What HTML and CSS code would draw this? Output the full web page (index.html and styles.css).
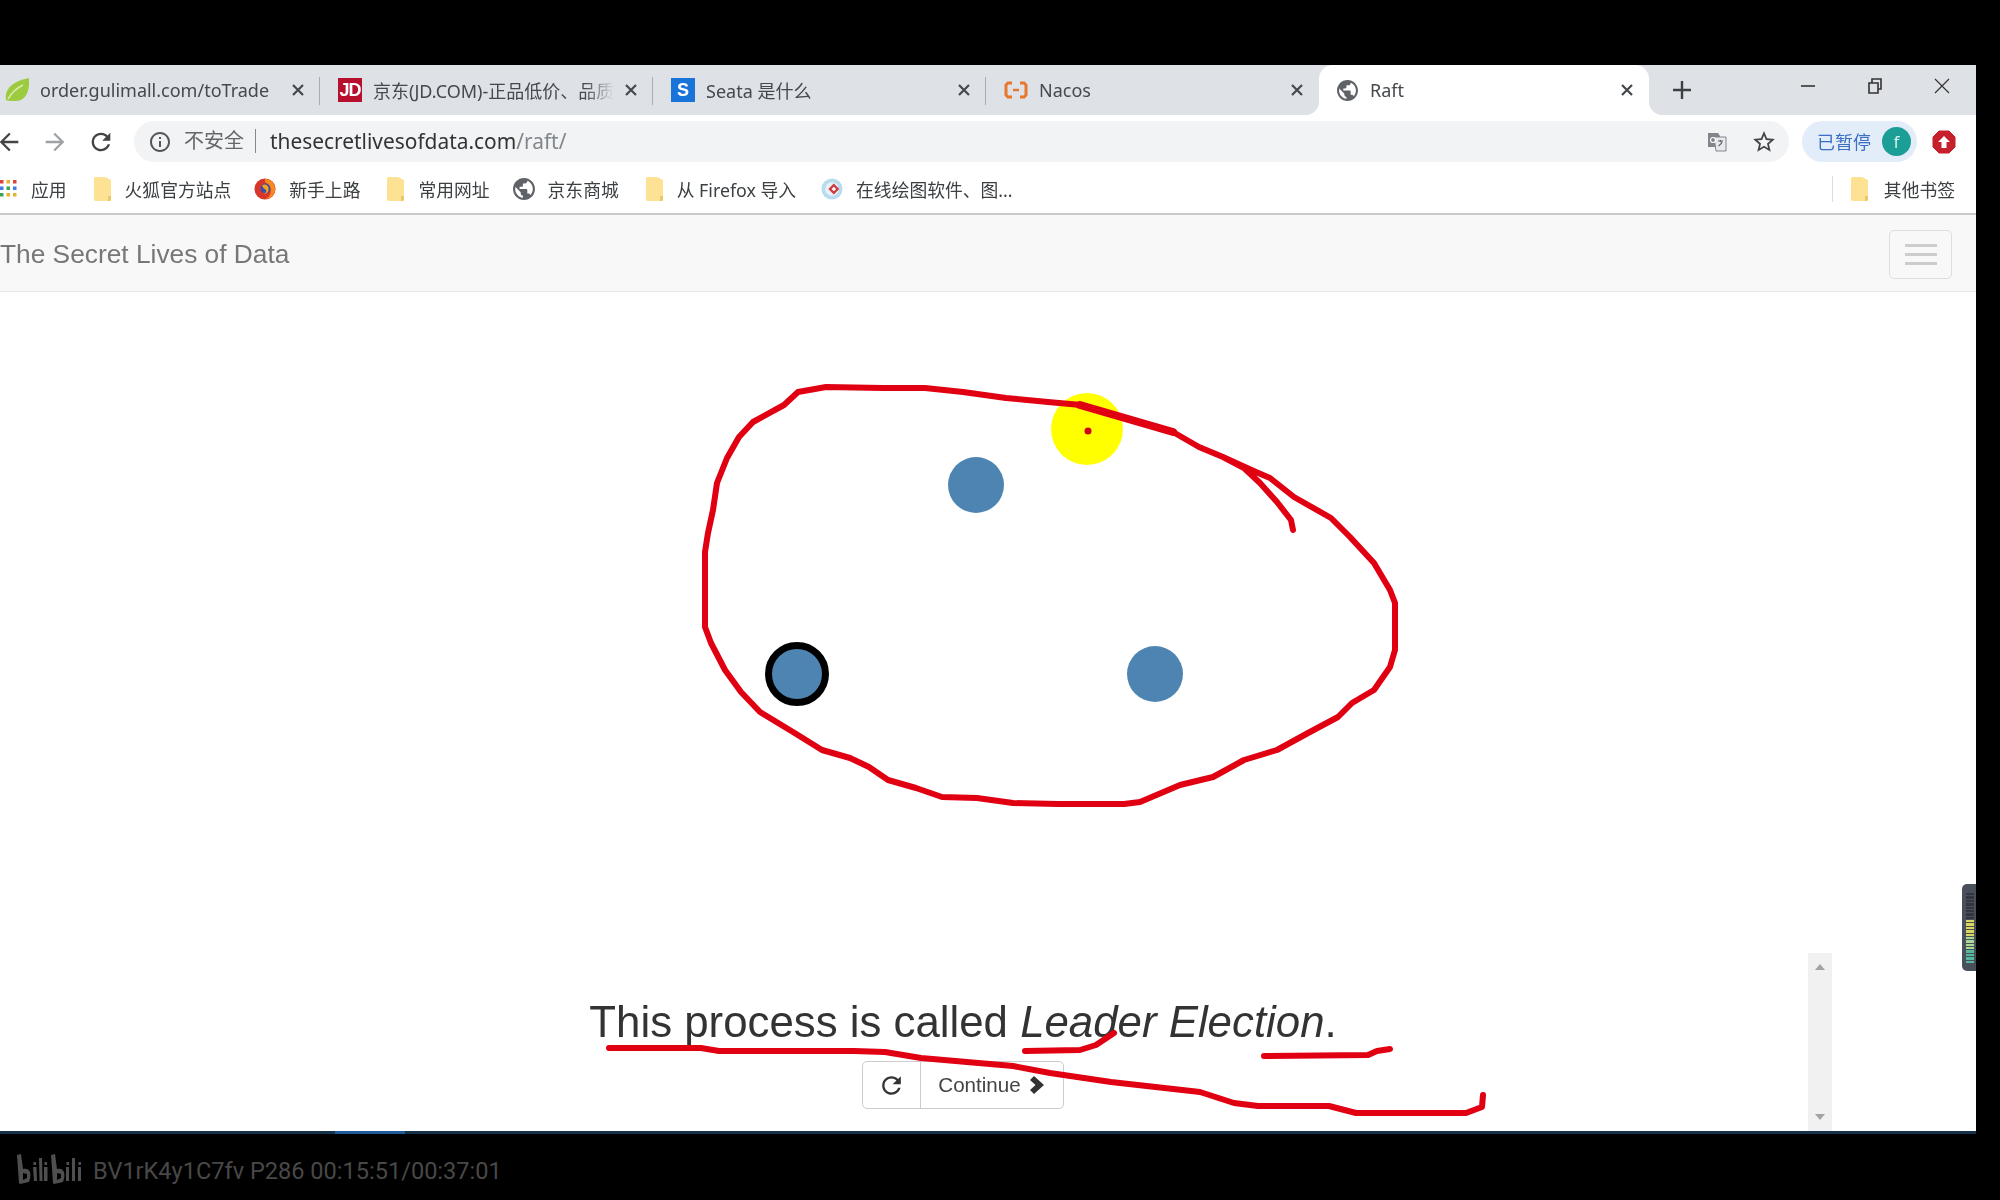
FILE: index.html
```html
<!DOCTYPE html>
<html>
<head>
    <title>Raft</title>
    <link rel="stylesheet" href="styles.css">
</head>
<body>
    <svg class="defs" width="0" height="0">
        <symbol id="globe" viewBox="2 2 20 20"><path d="M12 2C6.48 2 2 6.48 2 12s4.48 10 10 10 10-4.48 10-10S17.52 2 12 2zm-1 17.93c-3.95-.49-7-3.85-7-7.93 0-.62.08-1.21.21-1.79L9 15v1c0 1.1.9 2 2 2v1.93zm6.9-2.54c-.26-.81-1-1.39-1.9-1.39h-1v-3c0-.55-.45-1-1-1H8v-2h2c.55 0 1-.45 1-1V7h2c1.1 0 2-.9 2-2v-.41c2.93 1.19 5 4.06 5 7.41 0 2.08-.8 3.97-2.1 5.39z"/></symbol>
        <symbol id="folder" viewBox="0 0 18 24"><path d="M1 0h10l6 3v20l-1 1H1l-1-1V1z" fill="#fde293"/><path d="M14 24v-5h3v4l-1 1z" fill="#e8c86a"/></symbol>
        <symbol id="close" viewBox="0 0 14 14"><path d="M2 2l10 10M12 2L2 12" stroke="#45484c" stroke-width="2.2" fill="none"/></symbol>
    </svg>

    <div class="screen">
        <div class="tabs">
            <div class="tab">
                <svg class="favicon" viewBox="0 0 24 24"><path d="M1 22C-1 11 8 3 24 0c1 13-3 23-14 23-3 0-7 0-9-1z" fill="#9ccb3f"/><path d="M3 21C7 14 12 10 18 7" stroke="#d9ecb0" stroke-width="1.5" fill="none"/></svg>
                <span class="tab-title">order.gulimall.com/toTrade</span>
                <svg class="tab-close"><use href="#close"/></svg>
            </div>
            <div class="tab">
                <span class="favicon fav-jd">JD</span>
                <span class="tab-title tab-fade">京东(JD.COM)-正品低价、品质</span>
                <svg class="tab-close"><use href="#close"/></svg>
            </div>
            <div class="tab">
                <span class="favicon fav-s">S</span>
                <span class="tab-title">Seata 是什么</span>
                <svg class="tab-close"><use href="#close"/></svg>
            </div>
            <div class="tab tab-last">
                <svg class="favicon" viewBox="0 0 24 24"><path d="M8 5H4L2 7v10l2 2h4M16 5h4l2 2v10l-2 2h-4" stroke="#e8762d" stroke-width="3" fill="none"/><path d="M9 12h6" stroke="#e8762d" stroke-width="2.4"/></svg>
                <span class="tab-title">Nacos</span>
                <svg class="tab-close"><use href="#close"/></svg>
            </div>
            <div class="tab tab-active">
                <svg class="favicon globe"><use href="#globe"/></svg>
                <span class="tab-title">Raft</span>
                <svg class="tab-close"><use href="#close"/></svg>
            </div>
            <svg class="new-tab" viewBox="0 0 18 18"><path d="M9 0v18M0 9h18" stroke="#3c4043" stroke-width="2.4"/></svg>
            <div class="win-controls">
                <div class="win-btn"><svg viewBox="0 0 16 16"><path d="M1 8h14" stroke="#333" stroke-width="1.6"/></svg></div>
                <div class="win-btn"><svg viewBox="0 0 16 16"><path d="M2 5h9v10H2zM5 5V1h9v10h-3" stroke="#333" stroke-width="1.6" fill="none"/></svg></div>
                <div class="win-btn"><svg viewBox="0 0 16 16"><path d="M1 1l14 14M15 1L1 15" stroke="#333" stroke-width="1.2" fill="none"/></svg></div>
            </div>
        </div>

        <div class="toolbar">
            <div class="nav-btn"><svg viewBox="0 0 24 24"><path d="M20 11H7.83l5.59-5.59L12 4l-8 8 8 8 1.41-1.41L7.83 13H20v-2z" fill="#444"/></svg></div>
            <div class="nav-btn"><svg viewBox="0 0 24 24"><path d="M12 4l-1.41 1.41L16.17 11H4v2h12.17l-5.58 5.59L12 20l8-8z" fill="#a0a3a6"/></svg></div>
            <div class="nav-btn"><svg viewBox="0 0 24 24"><path d="M17.65 6.35C16.2 4.9 14.21 4 12 4c-4.42 0-7.99 3.58-7.99 8s3.57 8 7.99 8c3.73 0 6.84-2.55 7.73-6h-2.08c-.82 2.33-3.04 4-5.65 4-3.31 0-6-2.69-6-6s2.69-6 6-6c1.66 0 3.14.69 4.22 1.78L13 11h7V4l-2.35 2.35z" fill="#444"/></svg></div>
            <div class="omnibox">
                <svg class="info-icon" viewBox="2 2 20 20"><path d="M11 7h2v2h-2zm0 4h2v6h-2zm1-9C6.48 2 2 6.48 2 12s4.48 10 10 10 10-4.48 10-10S17.52 2 12 2zm0 18c-4.41 0-8-3.59-8-8s3.59-8 8-8 8 3.59 8 8-3.59 8-8 8z" fill="#555"/></svg>
                <span class="not-secure">不安全</span>
                <span class="url">thesecretlivesofdata.com<span class="url-path">/raft/</span></span>
                <svg class="translate-icon" viewBox="0 0 20 20"><path d="M1 1h10l2 3v11H1z" fill="#80868b"/><path d="M7 5h12v14H9z" fill="#e8eaed" stroke="#80868b"/><path d="M11 9h5M13.500 8v2M15 10c-.5 2-2 3-3.500 4" stroke="#5f6368" stroke-width="1.200" fill="none"/><circle cx="6" cy="8" r="2.500" fill="none" stroke="#fff" stroke-width="1.200"/></svg>
                <svg class="star-icon" viewBox="1 1 22 22"><path d="M22 9.240l-7.190-.62L12 2 9.190 8.630 2 9.240l5.460 4.730L5.820 21 12 17.270 18.180 21l-1.630-7.030L22 9.240zM12 15.400l-3.760 2.270 1-4.280-3.320-2.880 4.380-.38L12 6.100l1.710 4.040 4.380.38-3.320 2.880 1 4.280L12 15.400z" fill="#444"/></svg>
            </div>
            <div class="profile">
                <span class="profile-text">已暂停</span>
                <span class="avatar">f</span>
            </div>
            <svg class="ext-icon" viewBox="0 0 24 24"><path d="M7 1h10l6 6v10l-6 6H7l-6-6V7z" fill="#c5202b" stroke="#c5202b" stroke-linejoin="round"/><path d="M12 6l6 6h-3.500v6h-5v-6H6z" fill="#fff"/></svg>
        </div>

        <div class="bookmarks">
            <div class="bookmark">
                <svg class="apps-icon" viewBox="0 0 17 17">
                    <rect x="0" y="0" width="3.500" height="3.500" fill="#d9453a"/><rect x="6.500" y="0" width="3.500" height="3.500" fill="#e8b32e"/><rect x="13" y="0" width="3.500" height="3.500" fill="#d9453a"/>
                    <rect x="0" y="6.500" width="3.500" height="3.500" fill="#3f7fe0"/><rect x="6.500" y="6.500" width="3.500" height="3.500" fill="#3da35a"/><rect x="13" y="6.500" width="3.500" height="3.500" fill="#3f7fe0"/>
                    <rect x="0" y="13" width="3.500" height="3.500" fill="#3da35a"/><rect x="6.500" y="13" width="3.500" height="3.500" fill="#e8b32e"/><rect x="13" y="13" width="3.500" height="3.500" fill="#e8b32e"/>
                </svg>
                <span>应用</span>
            </div>
            <div class="bookmark"><svg class="folder"><use href="#folder"/></svg><span>火狐官方站点</span></div>
            <div class="bookmark">
                <svg class="bm-icon" viewBox="0 0 24 24"><circle cx="12" cy="12" r="11.500" fill="#d9362b"/><path d="M12 1c7 0 11 5 11 11 0 6-4 11-11 11 5-2 7-6 6-11-1-4-3-6-6-7z" fill="#f68a1e"/><circle cx="12.500" cy="11.500" r="5.500" fill="#3a4fa3"/><path d="M9 8c3-2 7 0 7 4s-3 6-6 5c3 0 4-2 3-4-1-1-3-1-4-5z" fill="#f9a11b"/></svg>
                <span>新手上路</span>
            </div>
            <div class="bookmark"><svg class="folder"><use href="#folder"/></svg><span>常用网址</span></div>
            <div class="bookmark"><svg class="bm-icon globe"><use href="#globe"/></svg><span>京东商城</span></div>
            <div class="bookmark"><svg class="folder"><use href="#folder"/></svg><span>从 Firefox 导入</span></div>
            <div class="bookmark bookmark-last">
                <svg class="bm-icon" viewBox="0 0 24 24"><circle cx="12" cy="12" r="11.500" fill="#b9dbee"/><circle cx="12" cy="12" r="7.500" fill="#e6f2f8"/><path d="M14 6l6 6-6 6-6-6z" fill="#d2393f"/><path d="M14 9.500l2.500 2.500-2.500 2.500-2.500-2.500z" fill="#fff"/></svg>
                <span>在线绘图软件、图...</span>
            </div>
            <div class="bookmark-other"><svg class="folder"><use href="#folder"/></svg><span>其他书签</span></div>
        </div>

        <div class="navbar">
            <span class="brand">The Secret Lives of Data</span>
            <div class="hamburger"><i></i><i></i><i></i></div>
        </div>

        <div class="content">
            <svg class="nodes" viewBox="0 292 1976 695">
                <circle cx="976" cy="485" r="28" fill="#4e84b1"/>
                <circle cx="1155" cy="674" r="28" fill="#4e84b1"/>
                <circle cx="797" cy="674" r="28.500" fill="#4e84b1" stroke="#000" stroke-width="7"/>
            </svg>
            <div class="message">
                <p class="message-text">This process is called <em>Leader Election</em>.</p>
                <div class="btn-group">
                    <div class="btn btn-icon"><svg viewBox="3 3 18 18"><path d="M17.650 6.350C16.200 4.900 14.210 4 12 4c-4.420 0-7.990 3.580-7.990 8s3.570 8 7.990 8c3.730 0 6.840-2.550 7.730-6h-2.080c-.82 2.330-3.040 4-5.650 4-3.310 0-6-2.690-6-6s2.690-6 6-6c1.660 0 3.140.69 4.220 1.780L13 11h7V4l-2.350 2.350z" fill="#333"/></svg></div>
                    <div class="btn btn-continue">Continue <svg viewBox="0 0 14 18"><path d="M4 0l10 9-10 9-4-4 5.500-5L0 4z" fill="#333"/></svg></div>
                </div>
            </div>

            <div class="scrollbar">
                <span class="arrow-up"></span>
                <span class="arrow-down"></span>
            </div>
            <div class="meter"><i class="off"></i><i class="off"></i><i class="off"></i><i class="off"></i><i class="off"></i><i class="off"></i><i class="off"></i><i class="off"></i><i class="y"></i><i class="y"></i><i class="y"></i><i class="y"></i><i class="y"></i><i class="g"></i><i class="g"></i><i class="g"></i><i class="g"></i><i class="t"></i><i class="t"></i><i class="t"></i><i class="t"></i></div>

            <!-- hand drawn marks over the page -->
            <svg class="ink" viewBox="0 292 1976 839">
                <circle cx="1087" cy="429" r="36" fill="#ffff00"/>
                <circle cx="1088" cy="431" r="3.500" fill="#d0021b"/>
                <path d="M1293 530L1291 520 1277 502 1260 483 1244 468 1223 457 1199 447 1173 432 1142 423 1114 415 1081 405 1048 402 1006 398 963 392 925 388 883 388 826 387 798 392 784 405 753 422 739 437 727 458 717 483 713 510 708 533 705 552 705 597 705 627 711 643 725 670 741 692 760 712 793 732 822 750 850 758 869 767 888 780 916 788 942 797 977 798 1013 803 1058 804 1124 804 1140 802 1180 785 1213 777 1244 760 1277 750 1308 733 1338 717 1352 703 1374 690 1390 667 1395 650 1395 603 1390 590 1374 563 1350 537 1331 518 1294 497 1270 478 1256 472 1223 457 1199 447"/>
                <path d="M1080 405L1173 432" class="ink-thick"/>
                <path d="M609 1048L701 1048 719 1051 854 1051 885 1052 921 1058 1013 1066 1050 1073 1111 1082 1200 1092 1234 1103 1258 1106 1329 1106 1356 1113 1466 1113 1482 1107 1483 1095"/>
                <path d="M1025 1051L1080 1050 1096 1045 1114 1033"/>
                <path d="M1264 1056L1368 1055 1377 1051 1390 1049"/>
            </svg>
        </div>
    </div>

    <div class="player-bar">
        <div class="progress"><i></i></div>
        <div class="player-info">
            <svg class="bili-logo" viewBox="0 0 70 31">
                <g fill="#4f4f4f">
                    <path d="M2 2l4-1 2 15c3-1 6 0 7 3 1 4 0 7-1 10l-9 2-1-1z"/>
                    <path d="M18 14h3.500l.5 14h-3zM18.500 9h2.500v3h-2.500zM24 5h3l.5 23h-3zM29 14h3.500v14H29zM29.500 9h2.500v3h-2.500z"/>
                    <path d="M36 2l4-1 2 15c3-1 6 0 7 3 1 4 0 7-1 10l-9 2-1-1z"/>
                    <path d="M51 14h3v14h-3zM51.500 9h2.500v3h-2.500zM57 5h3v23h-3zM63 14h3v14h-3zM63.500 9h2.500v3h-2.500z"/>
                </g>
                <path d="M8 20l4 1v4l-4 2zM42 20l4 1v4l-4 2z" fill="#000"/>
            </svg>
            <span class="video-id">BV1rK4y1C7fv P286 00:15:51/00:37:01</span>
        </div>
    </div>
</body>
</html>
```
FILE: styles.css
```css
html, body {
    margin: 0;
    height: 1200px;
    overflow: hidden;
    background: #000;
}
.defs {
    position: absolute;
}
.screen {
    width: 1976px;
    padding-top: 65px;
    filter: blur(0.5px);
    font-family: "Noto Sans", "Noto Sans CJK SC", sans-serif;
    overflow: hidden;
}

/* tab strip */
.tabs {
    display: flex;
    height: 50px;
    margin-left: -13px;
    background: #dee1e6;
}
.tab {
    position: relative;
    box-sizing: border-box;
    display: flex;
    align-items: center;
    width: 333px;
    padding: 0 15px 0 18px;
}
.tab::after {
    content: "";
    position: absolute;
    top: 12px;
    right: 0;
    width: 1px;
    height: 28px;
    background: #a9acb0;
}
.tab-last::after {
    display: none;
}
.tab-active {
    width: 330px;
    border-radius: 14px 14px 0 0;
    background: #fff;
}
.tab-active::before, .tab-active::after {
    content: "";
    position: absolute;
    top: auto;
    bottom: 0;
    width: 14px;
    height: 14px;
}
.tab-active::before {
    left: -14px;
    background: radial-gradient(circle at 0 0, transparent 14px, #fff 14.5px);
}
.tab-active::after {
    right: -14px;
    background: radial-gradient(circle at 100% 0, transparent 14px, #fff 14.5px);
}
.favicon {
    flex: none;
    width: 24px;
    height: 24px;
    margin-right: 11px;
}
.fav-jd, .fav-s {
    color: #fff;
    font: bold 18px/24px "Liberation Sans", sans-serif;
    text-align: center;
}
.fav-jd {
    background: #b70f2e;
    letter-spacing: -1px;
}
.fav-s {
    background: #1a73d9;
}
.globe {
    width: 21px;
    height: 21px;
    fill: #5f6368;
}
.tab-active .favicon {
    margin-right: 12px;
}
.tab-title {
    flex: 1;
    overflow: hidden;
    color: #45484c;
    font-size: 18px;
    white-space: nowrap;
}
.tab-fade {
    -webkit-mask-image: linear-gradient(to right, #000 88%, transparent 100%);
    mask-image: linear-gradient(to right, #000 88%, transparent 100%);
}
.tab-close {
    flex: none;
    width: 14px;
    height: 14px;
    margin-left: 10px;
}
.new-tab {
    flex: none;
    align-self: center;
    width: 18px;
    height: 18px;
    margin-left: 24px;
}
.win-controls {
    display: flex;
    margin-left: auto;
    margin-right: 1px;
}
.win-btn {
    display: flex;
    align-items: center;
    justify-content: center;
    width: 67px;
    height: 42px;
}
.win-btn svg {
    width: 16px;
    height: 16px;
}

/* address row */
.toolbar {
    display: flex;
    align-items: center;
    box-sizing: border-box;
    height: 51px;
    padding: 6px 20px 4px 0;
    background: #fff;
}
.nav-btn {
    display: flex;
    flex: none;
    align-items: center;
    justify-content: center;
    width: 46px;
    height: 30px;
}
.nav-btn:first-child {
    margin-left: -14px;
}
.nav-btn svg {
    width: 28px;
    height: 28px;
}
.omnibox {
    display: flex;
    flex: 1;
    align-items: center;
    box-sizing: border-box;
    height: 41px;
    margin: 0 13px 0 10px;
    padding: 0 13px 0 16px;
    border-radius: 21px;
    background: #f1f3f4;
}
.info-icon {
    width: 20px;
    height: 20px;
    margin-right: 14px;
}
.not-secure {
    margin-bottom: 2px;
    padding-right: 11px;
    border-right: 1px solid #888;
    color: #666;
    font-size: 20px;
    line-height: 24px;
}
.url {
    margin-bottom: 2px;
    margin-left: 14px;
    color: #333;
    font-size: 20.9px;
}
.url-path {
    color: #80868b;
}
.translate-icon {
    width: 20px;
    height: 20px;
    margin-left: auto;
}
.star-icon {
    width: 24px;
    height: 24px;
    margin-left: 25px;
}
.profile {
    display: flex;
    flex: none;
    align-items: center;
    box-sizing: border-box;
    width: 115px;
    height: 41px;
    padding-left: 15px;
    border-radius: 21px;
    background: #e3ecf9;
}
.profile-text {
    margin-bottom: 2px;
    color: #3a6fc4;
    font-size: 18px;
}
.avatar {
    width: 29px;
    height: 29px;
    margin-left: 11px;
    border-radius: 50%;
    background: #1a9e96;
    color: #d8f2ef;
    font-size: 17px;
    line-height: 29px;
    text-align: center;
}
.ext-icon {
    flex: none;
    width: 24px;
    height: 24px;
    margin-left: 15px;
}

/* bookmarks */
.bookmarks {
    display: flex;
    align-items: center;
    gap: 23px;
    box-sizing: border-box;
    height: 49px;
    padding-bottom: 2px;
    border-bottom: 2px solid #c8c9cb;
    background: #fff;
    color: #3c4043;
    font-size: 17.8px;
}
.bookmark {
    display: flex;
    align-items: center;
    gap: 13px;
}
.bookmark-last {
    margin-left: 2px;
}
.bookmark-other {
    display: flex;
    align-items: center;
    gap: 15px;
    margin-left: auto;
    margin-right: 21px;
    padding-left: 18px;
    border-left: 1px solid #dadce0;
}
.apps-icon {
    width: 17px;
    height: 17px;
    margin-right: 1px;
}
.folder {
    width: 18px;
    height: 24px;
    margin-left: 4px;
}
.bookmark-other .folder {
    margin-left: 0;
}
.bm-icon {
    width: 22px;
    height: 22px;
}

/* page */
.navbar {
    display: flex;
    align-items: center;
    justify-content: space-between;
    box-sizing: border-box;
    height: 77px;
    padding-top: 2px;
    padding-right: 24px;
    border-bottom: 1px solid #e7e7e7;
    background: #f8f8f8;
}
.brand {
    color: #777;
    font: 26.3px "Liberation Sans", Arial, sans-serif;
}
.hamburger {
    display: flex;
    flex-direction: column;
    align-items: center;
    justify-content: center;
    gap: 6px;
    box-sizing: border-box;
    width: 63px;
    height: 49px;
    border: 1px solid #ddd;
    border-radius: 5px;
}
.hamburger i {
    display: block;
    width: 32px;
    height: 3px;
    background: #ccc;
}
.content {
    position: relative;
    height: 839px;
    background: #fff;
    font-family: "Liberation Sans", Arial, sans-serif;
}
.nodes {
    display: block;
    width: 1976px;
    height: 695px;
}
.message {
    display: flex;
    flex-direction: column;
    align-items: center;
    padding-right: 50px;
}
.message-text {
    margin: 0 0 5px;
    color: #333;
    font-size: 43.8px;
    line-height: 69px;
    white-space: nowrap;
}
.btn-group {
    display: flex;
    height: 48px;
    box-sizing: border-box;
    border: 1px solid #ccc;
    border-radius: 5px;
    background: #fff;
}
.btn {
    display: flex;
    align-items: center;
    color: #444;
    font-size: 20.6px;
}
.btn-icon {
    justify-content: center;
    width: 57px;
    border-right: 1px solid #ccc;
}
.btn-icon svg {
    width: 21px;
    height: 21px;
}
.btn-continue {
    gap: 9px;
    padding: 0 19px 0 17px;
}
.btn-continue svg {
    width: 14px;
    height: 18px;
}
.scrollbar {
    position: absolute;
    top: 661px;
    right: 144px;
    bottom: 0;
    width: 24px;
    background: #f1f1f1;
}
.arrow-up, .arrow-down {
    position: absolute;
    left: 7px;
    border-left: 5px solid transparent;
    border-right: 5px solid transparent;
}
.arrow-up {
    top: 11px;
    border-bottom: 6px solid #a3a3a3;
}
.arrow-down {
    bottom: 11px;
    border-top: 6px solid #a3a3a3;
}
.meter {
    position: absolute;
    top: 592px;
    right: 0;
    display: flex;
    flex-direction: column;
    gap: 1px;
    box-sizing: border-box;
    width: 14px;
    height: 87px;
    padding: 9px 2px 8px 4px;
    border-radius: 5px 0 0 5px;
    background: #4a4f5c;
}
.meter i {
    display: block;
    flex: 1;
}
.meter .off {
    background: #33363f;
}
.meter .y {
    background: #d9d65c;
}
.meter .g {
    background: #a9d890;
}
.meter .t {
    background: #55b79c;
}
.ink {
    position: absolute;
    top: 0;
    left: 0;
    width: 1976px;
    height: 839px;
    pointer-events: none;
}
.ink path {
    fill: none;
    stroke: #e00012;
    stroke-width: 6;
    stroke-linecap: round;
    stroke-linejoin: round;
}
.ink .ink-thick {
    stroke-width: 8;
}

/* player overlay at the bottom */
.player-bar {
    height: 69px;
}
.progress {
    width: 1976px;
    height: 3px;
    background: #16324a;
}
.progress i {
    display: block;
    width: 70px;
    height: 3px;
    margin-left: 335px;
    background: #1d5c99;
}
.player-info {
    display: flex;
    align-items: center;
    gap: 8px;
    box-sizing: border-box;
    height: 66px;
    padding-top: 8px;
    padding-left: 15px;
}
.bili-logo {
    width: 70px;
    height: 31px;
    margin-bottom: 6px;
}
.video-id {
    color: #484848;
    font-family: Roboto, sans-serif;
    font-size: 23.55px;
}
```
